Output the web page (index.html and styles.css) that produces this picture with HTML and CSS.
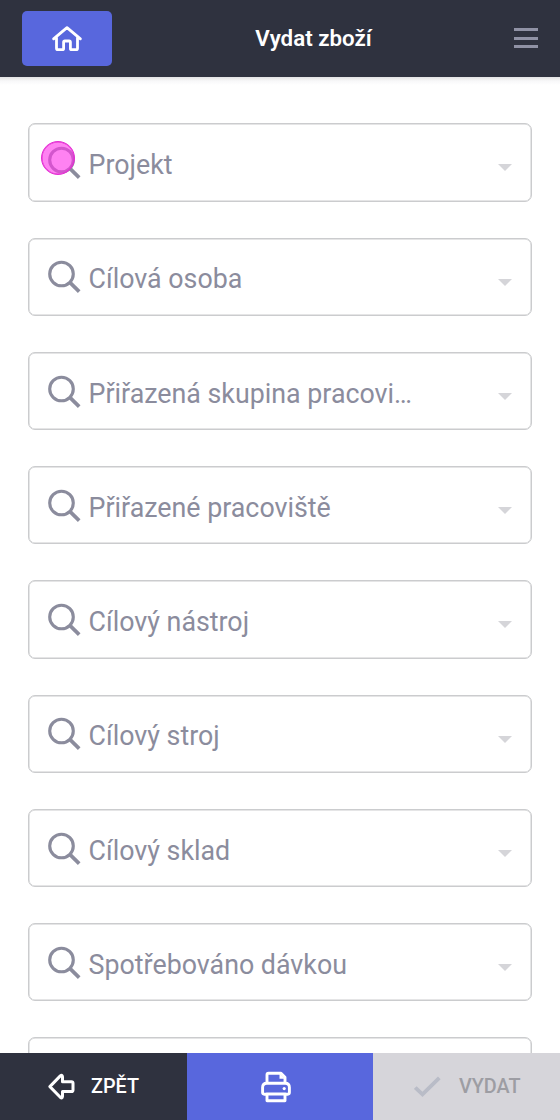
FILE: index.html
```html
<!DOCTYPE html>
<html lang="cs">
<head>
<meta charset="utf-8">
<title>Vydat zboží</title>
<link rel="stylesheet" href="styles.css">
</head>
<body>
<svg class="defs" width="0" height="0" aria-hidden="true">
  <symbol id="search" viewBox="0 0 34 34">
    <circle cx="14.5" cy="14" r="11.8" fill="none" stroke="currentColor" stroke-width="3.1"/>
    <path d="M22.8 22.4 32.2 31.6" fill="none" stroke="currentColor" stroke-width="3.7"/>
  </symbol>
</svg>
<div class="app">
  <header class="topbar">
    <button class="home" aria-label="Domů">
      <svg width="32" height="28" viewBox="0 0 32 28" fill="none" stroke="#fff" stroke-width="2.8" stroke-linejoin="round" stroke-linecap="round"><path d="M2.6 13.8 16 2.7 29.4 13.8M5.5 12.5V23.2Q5.5 24.7 7 24.7H11.3Q12.6 24.7 12.6 23.4V17.3Q12.6 16 13.9 16H18.1Q19.4 16 19.4 17.3V23.4Q19.4 24.7 20.7 24.7H25Q26.5 24.7 26.5 23.2V12.5"/></svg>
    </button>
    <h1 class="title">Vydat zboží</h1>
    <button class="menu" aria-label="Menu"><span class="line"></span><span class="line"></span><span class="line"></span></button>
  </header>
  <main class="content">
    <div class="field"><svg class="search"><use href="#search"/></svg><span class="label">Projekt</span><i class="caret"></i><span class="pointer"></span></div>
    <div class="field"><svg class="search"><use href="#search"/></svg><span class="label">Cílová osoba</span><i class="caret"></i></div>
    <div class="field"><svg class="search"><use href="#search"/></svg><span class="label">Přiřazená skupina pracovi…</span><i class="caret"></i></div>
    <div class="field"><svg class="search"><use href="#search"/></svg><span class="label">Přiřazené pracoviště</span><i class="caret"></i></div>
    <div class="field"><svg class="search"><use href="#search"/></svg><span class="label">Cílový nástroj</span><i class="caret"></i></div>
    <div class="field"><svg class="search"><use href="#search"/></svg><span class="label">Cílový stroj</span><i class="caret"></i></div>
    <div class="field"><svg class="search"><use href="#search"/></svg><span class="label">Cílový sklad</span><i class="caret"></i></div>
    <div class="field"><svg class="search"><use href="#search"/></svg><span class="label">Spotřebováno dávkou</span><i class="caret"></i></div>
    <div class="field"></div>
  </main>
  <footer class="actions">
    <button class="action back">
      <svg width="28" height="28" viewBox="0 0 28 28" fill="none" stroke="#fff" stroke-width="3" stroke-linejoin="round"><path d="M1.9 13.6 12.3 2.9Q14.3 1.2 14.5 3.8V8.7H23.4Q25 8.7 25 10.3V16.9Q25 18.5 23.4 18.5H14.5V23.4Q14.3 26 12.3 24.3Z"/></svg>
      <span class="caption">ZPĚT</span>
    </button>
    <button class="action print" aria-label="Tisk">
      <svg width="30" height="32" viewBox="0 0 30 32" fill="none" stroke="#fff" stroke-width="2.9" stroke-linejoin="round"><path d="M6 12V3.7Q6 2.2 7.5 2.2H20L24 6.2V12"/><path d="M5.5 23.2H3.2Q1.6 23.2 1.6 21.6V16.5Q1.6 12.3 5.8 12.3H24.2Q28.4 12.3 28.4 16.5V21.6Q28.4 23.2 26.8 23.2H24.5"/><path d="M6 23H24V29.8H6Z"/><path d="M18.5 2.2V7.7H24Z" fill="#fff" stroke="none"/><circle cx="23.2" cy="17.6" r="1.6" fill="#fff" stroke="none"/></svg>
    </button>
    <button class="action submit" disabled>
      <svg width="28" height="22" viewBox="0 0 28 22" fill="none" stroke="#b9bcc7" stroke-width="3.8"><path d="M1.3 11.5 8.5 18.4 25.3 1.8"/></svg>
      <span class="caption">VYDAT</span>
    </button>
  </footer>
</div>
</body>
</html>
```
FILE: styles.css
```css
* { box-sizing: border-box; }
body { margin: 0; font-family: Roboto, "Liberation Sans", sans-serif; background: #fff; }
button { border: 0; padding: 0; margin: 0; font: inherit; background: none; }
svg { display: block; flex: none; }
.defs { position: absolute; }
.app { height: 1120px; display: flex; flex-direction: column; overflow: hidden; }
.topbar {
  flex: none; height: 77px; padding: 0 22px;
  display: grid; grid-template-columns: 90px 1fr 24px; align-items: center;
  background: #2f323f;
}
.home { width: 90px; height: 55px; border-radius: 5px; background: #5867dd; display: flex; align-items: center; justify-content: center; }
.title { margin: 0; padding: 0 0 2px 1px; font-size: 22.3px; font-weight: 600; line-height: 28px; color: #fff; text-align: center; }
.menu { width: 24px; display: flex; flex-direction: column; gap: 5.5px; padding-bottom: 1px; }
.line { height: 3px; background: #9092a5; }
.content {
  flex: 1; min-height: 0; overflow: hidden;
  display: flex; flex-direction: column; gap: 36px; padding: 46.4px 28px 0;
  background: linear-gradient(#e2e2e4, #f8f8f9 4px, #fff 8px);
}
.field {
  position: relative; flex: none; height: 78.25px; padding: 0 19px 0 18px;
  display: flex; align-items: center;
  border: 1px solid #cbccce; border-radius: 7px; color: #8b8c9d;
  box-shadow: inset 0 0 0 .5px #cbccce;
}
.search { width: 34px; height: 34px; margin-top: 1px; }
.label { flex: 1; padding: 5px 0 0 7.6px; font-size: 26.8px; line-height: 34px; white-space: nowrap; }
.caret { border: 7px solid transparent; border-top-color: #d5d5d9; border-bottom: 0; margin-top: 10.5px; }
.pointer {
  position: absolute; left: 12px; top: 17px; width: 34px; height: 34px;
  border: 1px solid #e32fd2; border-radius: 50%; background: rgba(255, 53, 234, .62);
  box-shadow: inset 0 0 0 .5px #e32fd2;
}
.actions { flex: none; height: 67px; display: grid; grid-template-columns: 187px 186px 187px; }
.action { display: flex; align-items: center; font-size: 19.8px; font-weight: 500; line-height: 24px; }
.caption { padding-top: 1px; }
.back { background: #2f323f; color: #fff; padding-left: 48px; gap: 15px; }
.print { background: #5867dd; justify-content: center; padding-right: 8px; }
.submit { background: #d6d5da; color: #9d9da3; padding-left: 41px; gap: 17px; }
```
